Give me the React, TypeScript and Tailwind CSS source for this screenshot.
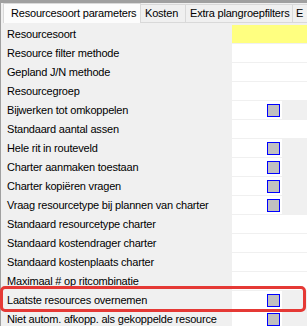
import React from 'react';

type Row = { label: string; kind: 'text' | 'yellow' | 'check' };

const rows: Row[] = [
  { label: 'Resourcesoort', kind: 'yellow' },
  { label: 'Resource filter methode', kind: 'text' },
  { label: 'Gepland J/N methode', kind: 'text' },
  { label: 'Resourcegroep', kind: 'text' },
  { label: 'Bijwerken tot omkoppelen', kind: 'check' },
  { label: 'Standaard aantal assen', kind: 'text' },
  { label: 'Hele rit in routeveld', kind: 'check' },
  { label: 'Charter aanmaken toestaan', kind: 'check' },
  { label: 'Charter kopiëren vragen', kind: 'check' },
  { label: 'Vraag resourcetype bij plannen van charter', kind: 'check' },
  { label: 'Standaard resourcetype charter', kind: 'text' },
  { label: 'Standaard kostendrager charter', kind: 'text' },
  { label: 'Standaard kostenplaats charter', kind: 'text' },
  { label: 'Maximaal # op ritcombinatie', kind: 'text' },
  { label: 'Laatste resources overnemen', kind: 'check' },
  { label: 'Niet autom. afkopp. als gekoppelde resource', kind: 'check' },
];

const Field: React.FC<{ kind: Row['kind'] }> = ({ kind }) => {
  if (kind === 'yellow') return <div className="flex-1 h-full bg-[#ffff80]" />;
  if (kind === 'text') return <div className="flex-1 h-full bg-white" />;
  return (
    <div className="w-[50px] h-full bg-white flex items-center justify-end pr-[2px]">
      <div className="w-[13px] h-[13px] bg-[#c0c0c0] border border-[#0000ff]" />
    </div>
  );
};

export default function App() {
  return (
    <div className="relative w-[307px] h-[326px] overflow-hidden bg-[#f0f0f0] text-black text-[11px] tracking-[-0.2px] leading-none font-['Liberation_Sans',Arial,sans-serif]">
      {/* top strip */}
      <div className="h-[3px] bg-[#a0a0a0]" />

      {/* tabs */}
      <div className="flex items-end h-[20px] border-l border-[#a0a0a0] bg-[#f0f0f0] whitespace-nowrap">
        <div className="ml-[2px] w-[138px] shrink-0 h-[20px] bg-[#fcfcfc] border-t border-l border-r border-[#d9d9d9] flex items-center pl-[7px]">
          Resourcesoort parameters
        </div>
        <div className="w-[45px] shrink-0 h-[19px] bg-[#f0f0f0] border-t border-r border-b border-[#d9d9d9] flex items-center pl-[4px]">
          Kosten
        </div>
        <div className="w-[107px] shrink-0 h-[19px] bg-[#f0f0f0] border-t border-r border-b border-[#d9d9d9] flex items-center pl-[4px]">
          Extra plangroepfilters
        </div>
        <div className="flex-1 h-[19px] bg-[#f0f0f0] border-t border-b border-[#d9d9d9] flex items-center pl-[3px] overflow-hidden">
          E
        </div>
      </div>

      {/* parameter rows */}
      <div className="border-l border-[#a0a0a0] pt-[2px] h-full">
        {rows.map((r) => (
          <div key={r.label} className="flex h-[18px] mb-[1px]">
            <div className="w-[231px] shrink-0 pl-[6px] flex items-center whitespace-nowrap overflow-hidden">
              {r.label}
            </div>
            <Field kind={r.kind} />
          </div>
        ))}
      </div>

      {/* highlight */}
      <div className="absolute left-0 top-[286px] w-[306px] h-[26px] border-[3px] border-[#e53935] rounded-[5px]" />
    </div>
  );
}
